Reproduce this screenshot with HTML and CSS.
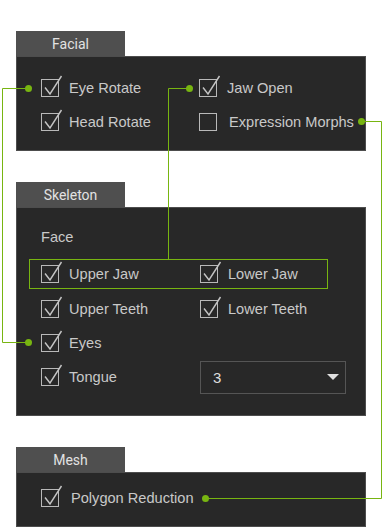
FILE: index.html
```html
<!DOCTYPE html>
<html lang="en">
<head>
    <meta charset="UTF-8">
    <meta name="viewport" content="width=device-width, initial-scale=1.0">
    <title>Export Options</title>
    <link rel="stylesheet" href="styles.css">
</head>
<body>
    <svg class="defs" width="0" height="0">
        <symbol id="chk" viewBox="0 0 18 18" overflow="visible">
            <rect x="0.5" y="0.5" width="17" height="17" fill="none" stroke="#b9b9b9" stroke-width="1"/>
            <path d="M4 8.5 L9 15 L20.5 -3" fill="none" stroke="#c4c4c4" stroke-width="1.4"/>
        </symbol>
        <symbol id="box" viewBox="0 0 18 18">
            <rect x="0.5" y="0.5" width="17" height="17" fill="none" stroke="#b9b9b9" stroke-width="1"/>
        </symbol>
    </svg>

    <div class="page">
        <!-- Facial -->
        <div class="group">
            <div class="tab">Facial</div>
            <div class="panel facial">
                <div class="grid">
                    <label class="opt"><svg class="cb"><use href="#chk"/></svg>Eye Rotate</label>
                    <label class="opt"><svg class="cb"><use href="#chk"/></svg>Jaw Open</label>
                    <label class="opt"><svg class="cb"><use href="#chk"/></svg>Head Rotate</label>
                    <label class="opt wide"><svg class="cb"><use href="#box"/></svg>Expression Morphs</label>
                </div>
            </div>
        </div>

        <!-- Skeleton -->
        <div class="group">
            <div class="tab">Skeleton</div>
            <div class="panel skeleton">
                <div class="caption">Face</div>
                <div class="highlight">
                    <label class="opt"><svg class="cb"><use href="#chk"/></svg>Upper Jaw</label>
                    <label class="opt"><svg class="cb"><use href="#chk"/></svg>Lower Jaw</label>
                </div>
                <div class="grid skel-grid">
                    <label class="opt"><svg class="cb"><use href="#chk"/></svg>Upper Teeth</label>
                    <label class="opt"><svg class="cb"><use href="#chk"/></svg>Lower Teeth</label>
                    <label class="opt"><svg class="cb"><use href="#chk"/></svg>Eyes</label>
                    <div></div>
                    <label class="opt"><svg class="cb"><use href="#chk"/></svg>Tongue</label>
                    <div class="select">
                        <span>3</span>
                        <span class="caret"></span>
                    </div>
                </div>
            </div>
        </div>

        <!-- Mesh -->
        <div class="group">
            <div class="tab">Mesh</div>
            <div class="panel mesh">
                <label class="opt wide"><svg class="cb"><use href="#chk"/></svg>Polygon Reduction</label>
            </div>
        </div>
    </div>

    <!-- connector lines drawn over the panels -->
    <svg class="links" width="382" height="530" viewBox="0 0 382 530">
        <g fill="none" stroke="#78b511" stroke-width="1">
            <path d="M28 88.5 H2.5 V342.5 H28"/>
            <path d="M189 88.5 H168.5 V259"/>
            <path d="M362 121.5 H381.5 V498.5 H205"/>
        </g>
        <g fill="#78b511">
            <circle cx="28.5" cy="88.5" r="3.5"/>
            <circle cx="28.5" cy="342.5" r="3.5"/>
            <circle cx="189.5" cy="88.5" r="3.5"/>
            <circle cx="361.5" cy="121.5" r="3.5"/>
            <circle cx="205.5" cy="498.5" r="3.5"/>
        </g>
    </svg>
</body>
</html>
```

FILE: styles.css
```css
body {
    margin: 0;
    background: #fff;
    font-family: "Liberation Sans", Arial, sans-serif;
    color: #c9c9c9;
}
.defs {
    position: absolute;
}
.page {
    padding: 31px 0 0 16px;
    width: 350px;
}
.group {
    margin-bottom: 31px;
}
.group:last-child {
    margin-bottom: 0;
}
.tab {
    width: 109px;
    height: 25px;
    line-height: 26px;
    background: #4f4f4f;
    color: #e2e2e2;
    font-family: Roboto, "Liberation Sans", sans-serif;
    font-size: 14px;
    text-align: center;
}
.panel {
    background: #282828;
    border: 1px solid #4d4d4d;
}
.facial {
    padding: 14px 0 11px 24px;
}
.grid {
    display: grid;
    grid-template-columns: 158px 1fr;
}
.opt {
    display: flex;
    align-items: center;
    gap: 10px;
    height: 34px;
    font-size: 14.6px;
    white-space: nowrap;
}
.opt.wide {
    gap: 12px;
}
.cb {
    width: 18px;
    height: 18px;
    flex: none;
    overflow: visible;
}
.skeleton {
    padding: 12px 0 21px 24px;
}
.caption {
    height: 34px;
    line-height: 34px;
    font-size: 14.6px;
}
.highlight {
    display: grid;
    grid-template-columns: 159px 1fr;
    margin: 5px 0 3px -12px;
    width: 286px;
    height: 28px;
    padding-left: 11px;
    border: 1px solid #78b511;
}
.highlight .opt {
    height: 28px;
}
.skel-grid {
    grid-template-columns: 159px 1fr;
}
.select {
    display: flex;
    align-items: center;
    justify-content: space-between;
    align-self: center;
    box-sizing: border-box;
    width: 146px;
    height: 33px;
    padding: 0 6px 0 12px;
    border: 1px solid #555;
    color: #dedede;
    font-size: 15px;
}
.caret {
    width: 0;
    height: 0;
    border-left: 6px solid transparent;
    border-right: 6px solid transparent;
    border-top: 6px solid #e0e0e0;
}
.mesh {
    padding: 8px 0 11px 24px;
}
.links {
    position: absolute;
    top: 0;
    left: 0;
    pointer-events: none;
}
```
